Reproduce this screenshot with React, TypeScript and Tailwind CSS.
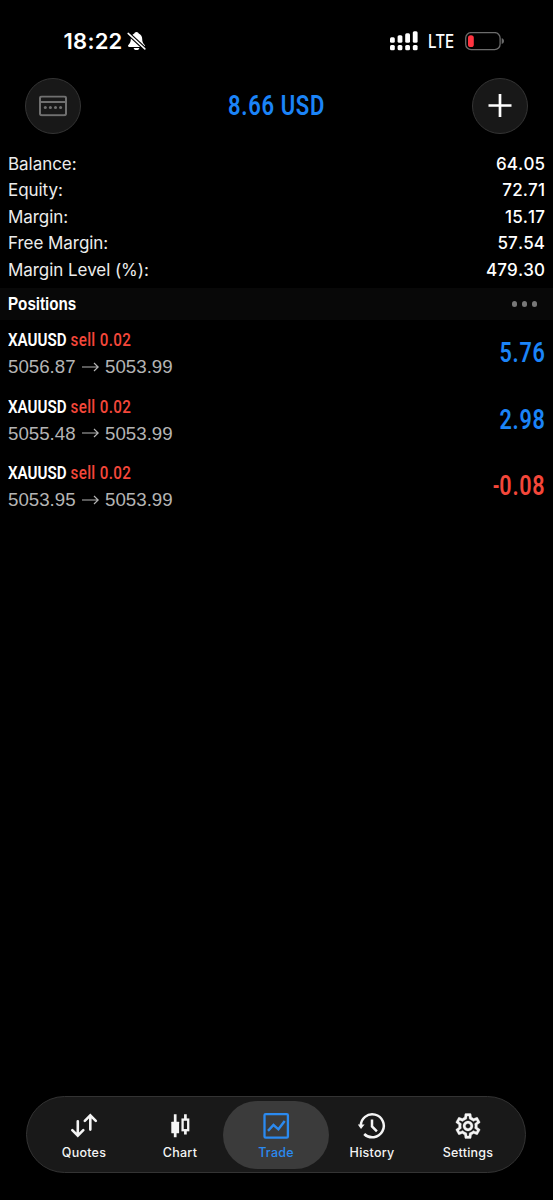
import type { ReactNode } from 'react'
import clsx from 'clsx'

interface Position {
  symbol: string
  side: string
  volume: string
  open: string
  current: string
  profit: string
}

const summary = [
  { label: 'Balance:', value: '64.05' },
  { label: 'Equity:', value: '72.71' },
  { label: 'Margin:', value: '15.17' },
  { label: 'Free Margin:', value: '57.54' },
  { label: 'Margin Level (%):', value: '479.30' },
]

const positions: Position[] = [
  { symbol: 'XAUUSD', side: 'sell', volume: '0.02', open: '5056.87', current: '5053.99', profit: '5.76' },
  { symbol: 'XAUUSD', side: 'sell', volume: '0.02', open: '5055.48', current: '5053.99', profit: '2.98' },
  { symbol: 'XAUUSD', side: 'sell', volume: '0.02', open: '5053.95', current: '5053.99', profit: '-0.08' },
]

function BellOffIcon() {
  return (
    <svg width="19" height="20" viewBox="0 0 20 20" fill="none">
      <path
        d="M10 0.500C8.700 0.500 7.900 1.300 7.700 2.200C5.200 3.200 4 5.400 4 8C4 10.900 3.300 12.100 2.100 13.300C1.400 14 1 14.500 1 15.100C1 15.900 1.600 16.300 2.400 16.300H17.600C18.400 16.300 19 15.900 19 15.100C19 14.500 18.600 14 17.900 13.300C16.700 12.100 16 10.900 16 8C16 5.400 14.800 3.200 12.300 2.200C12.100 1.300 11.300 0.500 10 0.500Z"
        fill="#fff"
      />
      <path d="M7 17.300H13C12.600 18.900 11.500 19.600 10 19.600C8.500 19.600 7.400 18.900 7 17.300Z" fill="#fff" />
      <path d="M1.200 2L18.800 18.300" stroke="#000" strokeWidth="4" />
      <path d="M1.200 2L18.800 18.300" stroke="#fff" strokeWidth="1.600" strokeLinecap="round" />
    </svg>
  )
}

function SignalIcon() {
  return (
    <svg width="28" height="20" viewBox="0 0 28 20" fill="#fff">
      <rect x="0" y="6.200" width="4.800" height="5.600" rx="1.500" />
      <rect x="7.600" y="4.200" width="4.800" height="7.600" rx="1.500" />
      <rect x="15.200" y="2.200" width="4.800" height="9.600" rx="1.500" />
      <rect x="22.800" y="0.200" width="4.800" height="11.600" rx="1.500" />
      <rect x="0" y="14" width="4.800" height="5.200" rx="1.500" />
      <rect x="7.600" y="14" width="4.800" height="5.200" rx="1.500" />
      <rect x="15.200" y="14" width="4.800" height="5.200" rx="1.500" />
      <rect x="22.800" y="14" width="4.800" height="5.200" rx="1.500" />
    </svg>
  )
}

function BatteryIcon() {
  return (
    <svg width="40" height="19" viewBox="0 0 40 19" fill="none">
      <rect x="0.700" y="0.600" width="34.400" height="17" rx="5.400" stroke="#6b6b6b" strokeWidth="1.300" />
      <rect x="3" y="3.200" width="5.800" height="11.800" rx="2.600" fill="#ff3440" />
      <path d="M36.700 6.200C38.100 6.500 39 7.600 39 9.100C39 10.600 38.100 11.700 36.700 12Z" fill="#6b6b6b" />
    </svg>
  )
}

function KeypadIcon() {
  return (
    <svg className="-translate-y-[0.500px]" width="28" height="21" viewBox="0 0 28 21" fill="none">
      <rect x="1" y="1" width="26" height="18.800" rx="1.800" stroke="#707070" strokeWidth="2" />
      <path d="M1 6.500H27" stroke="#707070" strokeWidth="2" />
      <g fill="#707070">
        <circle cx="6.300" cy="12" r="1.500" />
        <circle cx="11.400" cy="12" r="1.500" />
        <circle cx="16.500" cy="12" r="1.500" />
        <circle cx="21.600" cy="12" r="1.500" />
      </g>
    </svg>
  )
}

function QuotesIcon() {
  return (
    <svg
      width="28"
      height="28"
      viewBox="0 0 28 28"
      fill="none"
      stroke="#f4f4f4"
      strokeWidth="2.600"
      strokeLinecap="round"
    >
      <path d="M7.800 9.200V23.400M2.300 18.200L7.800 23.700L13.300 18.200" />
      <path d="M20.300 17.600V3.600M14.800 8.900L20.300 3.400L25.800 8.900" />
    </svg>
  )
}

function ChartIcon() {
  return (
    <svg width="28" height="28" viewBox="0 0 28 28" fill="none" stroke="#f4f4f4" strokeWidth="2.700">
      <path d="M9.200 2.300V25.200M19.400 2.300V7M19.400 18.800V22.600" />
      <rect x="5.300" y="9.700" width="7.800" height="11.600" rx="0.500" fill="#f4f4f4" stroke="none" />
      <rect x="16.600" y="7.600" width="5.600" height="10.600" strokeWidth="2.300" />
    </svg>
  )
}

function TradeIcon() {
  return (
    <svg width="28" height="28" viewBox="0 0 28 28" fill="none" stroke="#2b8af0" strokeWidth="2.300">
      <rect x="2.500" y="2.100" width="23.400" height="23.600" rx="1.200" />
      <path d="M6 18.900L11.500 13L16.400 17.300L22.700 9" strokeWidth="2.400" />
    </svg>
  )
}

function HistoryIcon() {
  return (
    <svg width="28" height="28" viewBox="0 0 28 28" fill="none" stroke="#f4f4f4" strokeWidth="2.500">
      <path d="M2.800 14.200A11.500 11.500 0 1 1 6.200 22" />
      <path d="M-0.200 12.600H6.600L3 16.900Z" fill="#f4f4f4" stroke="none" />
      <path d="M14 7.600V14.400L18.900 19.300" />
    </svg>
  )
}

function SettingsIcon() {
  return (
    <svg
      className="-my-[1px]"
      width="30"
      height="30"
      viewBox="0 0 24 24"
      fill="#f4f4f4"
      stroke="#f4f4f4"
      strokeWidth="0.250"
    >
      <path d="M19.430 12.980c.04-.32.07-.64.07-.98 0-.34-.03-.66-.07-.98l2.110-1.650c.19-.15.24-.42.12-.64l-2-3.460c-.09-.16-.26-.25-.44-.25-.06 0-.12.010-.17.030l-2.490 1c-.52-.4-1.080-.73-1.690-.98l-.38-2.650C14.460 2.180 14.250 2 14 2h-4c-.25 0-.46.180-.49.420l-.38 2.650c-.61.250-1.170.590-1.690.980l-2.490-1c-.06-.02-.12-.03-.18-.03-.17 0-.34.090-.43.250l-2 3.460c-.13.220-.07.490.12.640l2.110 1.650c-.04.320-.07.650-.07.980 0 .330.030.660.070.980l-2.110 1.650c-.19.150-.24.420-.12.640l2 3.460c.09.160.26.250.44.250.06 0 .12-.01.170-.03l2.490-1c.52.400 1.080.730 1.690.980l.38 2.650c.03.240.24.420.49.420h4c.25 0 .46-.18.490-.42l.38-2.650c.61-.25 1.170-.59 1.690-.98l2.490 1c.06.020.12.030.18.030.17 0 .34-.09.430-.25l2-3.460c.12-.22.070-.49-.12-.64l-2.110-1.650zm-1.980-1.710c.04.310.05.520.05.730 0 .210-.02.430-.05.730l-.14 1.130.89.700 1.080.840-.7 1.210-1.270-.51-1.040-.42-.9.680c-.43.320-.84.560-1.250.730l-1.060.430-.16 1.130-.2 1.350h-1.400l-.19-1.350-.16-1.130-1.060-.43c-.43-.18-.83-.41-1.230-.71l-.91-.7-1.060.430-1.270.510-.7-1.210 1.080-.84.890-.7-.14-1.130c-.03-.31-.05-.54-.05-.74s.02-.43.050-.73l.14-1.130-.89-.7-1.080-.84.700-1.210 1.270.510 1.040.420.900-.68c.43-.32.840-.56 1.250-.73l1.060-.43.160-1.130.2-1.350h1.390l.19 1.350.16 1.130 1.060.430c.43.180.830.410 1.230.710l.91.700 1.060-.43 1.270-.51.700 1.210-1.070.850-.89.700.14 1.130zM12 8c-2.210 0-4 1.790-4 4s1.790 4 4 4 4-1.790 4-4-1.790-4-4-4zm0 6c-1.100 0-2-.9-2-2s.9-2 2-2 2 .9 2 2-.9 2-2 2z" />
    </svg>
  )
}

const tabs: { label: string; icon: ReactNode; active?: boolean }[] = [
  { label: 'Quotes', icon: <QuotesIcon /> },
  { label: 'Chart', icon: <ChartIcon /> },
  { label: 'Trade', icon: <TradeIcon />, active: true },
  { label: 'History', icon: <HistoryIcon /> },
  { label: 'Settings', icon: <SettingsIcon /> },
]

function StatusBar() {
  return (
    <div className="flex h-[66px] items-start justify-between pt-[31px] pr-[48px] pl-[63.500px]">
      <div className="flex h-5 items-center gap-[3.500px]">
        <span className="w-[60px] text-[22px] leading-5 font-semibold tracking-[0.25px]">18:22</span>
        <BellOffIcon />
      </div>
      <div className="flex h-5 items-center">
        <SignalIcon />
        <span className="ml-[9.500px] w-[28.500px] origin-left scale-x-[0.820] text-[18.500px] leading-5 font-medium">LTE</span>
        <span className="ml-[9px]">
          <BatteryIcon />
        </span>
      </div>
    </div>
  )
}

function Header({ profit }: { profit: string }) {
  return (
    <header className="flex items-center justify-between px-[25px] pt-[12px]">
      <button className="flex size-14 items-center justify-center rounded-full border border-[#343434] bg-[#181818]">
        <KeypadIcon />
      </button>
      <h1 className="-mt-[1px] origin-center scale-x-[0.800] font-['Roboto'] text-[27.500px] leading-8 font-semibold tracking-[0.800px] whitespace-nowrap text-[#1b84f8]">
        {profit}
      </h1>
      <button className="flex size-14 items-center justify-center rounded-full border border-[#343434] bg-[#181818]">
        <svg className="-translate-y-[0.500px]" width="24" height="24" viewBox="0 0 24 24" stroke="#fff" strokeWidth="2.700">
          <path d="M12 0.500V23.500M0.500 12H23.500" />
        </svg>
      </button>
    </header>
  )
}

function PositionRow({ position }: { position: Position }) {
  const losing = position.profit.startsWith('-')
  return (
    <li className="flex h-[66.500px] items-center justify-between px-2">
      <div>
        <div className="origin-left scale-x-[0.820] font-['Roboto'] text-[18.500px] leading-[26px] font-semibold whitespace-nowrap">
          {position.symbol}{' '}
          <span className="font-medium tracking-[0.450px] text-[#f4473a]">
            {position.side} {position.volume}
          </span>
        </div>
        <div className="flex items-center font-['Liberation_Sans'] text-[18.700px] leading-[27px] text-[#b4b4b4]">
          {position.open}
          <svg className="mr-[6px] ml-[6.500px]" width="17" height="10" viewBox="0 0 17 10" fill="none" stroke="#b4b4b4" strokeWidth="1.200">
            <path d="M0 5H16M12 1L16.200 5L12 9" />
          </svg>
          {position.current}
        </div>
      </div>
      <span
        className={clsx(
          "-mt-[1px] -mr-[0.500px] flex origin-right scale-x-[0.800] items-center font-['Roboto'] text-[27px] font-semibold tracking-[0.9px]",
          losing ? 'text-[#f4473a]' : 'text-[#1b84f8]',
        )}
      >
        {losing && <span className="-mr-[1px] origin-right scale-x-[0.850]">-</span>}
        {position.profit.replace('-', '')}
      </span>
    </li>
  )
}

function TabBar() {
  return (
    <nav className="mb-[27px] ml-[26px] flex h-[77px] w-[500px] items-center justify-center rounded-full border border-[#333] bg-[#191919]">
      {tabs.map((tab) => (
        <button
          key={tab.label}
          className={clsx(
            'flex h-[68px] flex-col items-center rounded-full pt-[11px]',
            tab.active ? '-mx-[5px] w-[106px] bg-[#3b3b3b] text-[#2b8af0]' : 'w-24 text-[#f4f4f4]',
          )}
        >
          {tab.icon}
          <span className="mt-[5px] text-[12.500px] leading-4 font-medium tracking-[0.25px]">{tab.label}</span>
        </button>
      ))}
    </nav>
  )
}

export default function App() {
  return (
    <div className="flex h-[1200px] w-full flex-col bg-black font-['Inter',sans-serif] text-white">
      <StatusBar />
      <Header profit="8.66 USD" />

      <dl className="mt-[17.600px] px-2">
        {summary.map((row) => (
          <div key={row.label} className="flex h-[26.400px] items-center justify-between text-[17px]">
            <dt className="tracking-[-0.05px] text-[#ececec]">{row.label}</dt>
            <dd className="-mr-[0.200px] font-[450] tracking-[0.150px] [font-kerning:none]">{row.value}</dd>
          </div>
        ))}
      </dl>

      <div className="mt-[4.400px] flex h-8 items-center justify-between bg-[#080808] pr-4 pl-2">
        <h2 className="origin-left scale-x-[0.820] font-['Liberation_Sans'] text-[18.500px] font-bold">Positions</h2>
        <div className="flex gap-[4.500px]">
          <span className="size-[5.500px] rounded-full bg-[#777]" />
          <span className="size-[5.500px] rounded-full bg-[#777]" />
          <span className="size-[5.500px] rounded-full bg-[#777]" />
        </div>
      </div>

      <ul className="flex-1 pt-[0.800px]">
        {positions.map((position) => (
          <PositionRow key={position.open} position={position} />
        ))}
      </ul>

      <TabBar />
    </div>
  )
}
